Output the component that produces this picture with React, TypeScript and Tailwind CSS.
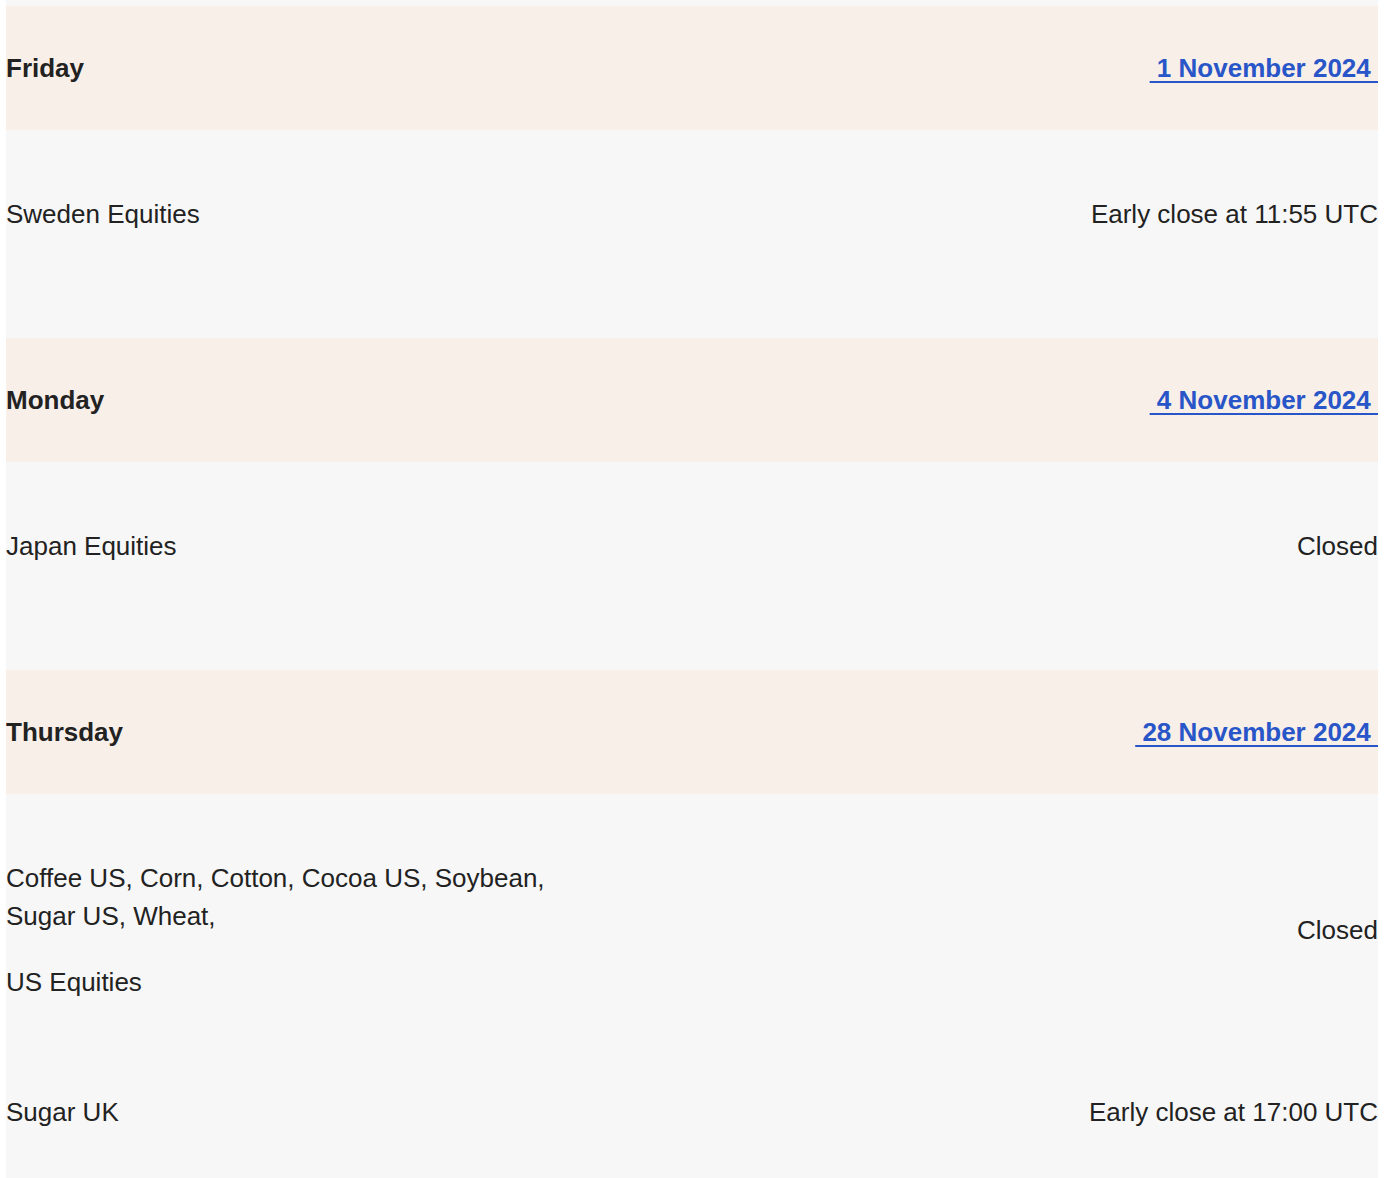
import React from "react";

type Item = { left: string[][]; right: string };
type Day = { day: string; date: string; items: Item[] };

const days: Day[] = [
  { day: "Friday", date: "1 November 2024", items: [{ left: [["Sweden Equities"]], right: "Early close at 11:55 UTC" }] },
  { day: "Monday", date: "4 November 2024", items: [{ left: [["Japan Equities"]], right: "Closed" }] },
  {
    day: "Thursday",
    date: "28 November 2024",
    items: [
      {
        left: [["Coffee US, Corn, Cotton, Cocoa US, Soybean,", "Sugar US, Wheat,"], ["US Equities"]],
        right: "Closed",
      },
      { left: [["Sugar UK"]], right: "Early close at 17:00 UTC" },
    ],
  },
];

export default function App() {
  return (
    <div
      className="min-h-[1178px] bg-white pl-[6px] pr-[10px] text-[#222222]"
      style={{ fontFamily: '"Liberation Sans", Arial, Helvetica, sans-serif' }}
    >
      <div className="bg-[#f7f7f7] pt-[6px]">
        {days.map((d) => (
          <section key={d.day}>
            <div className="flex h-[124px] items-center justify-between bg-[#f8efe9] text-[26px] font-bold leading-[38px]">
              <span>{d.day}</span>
              <a href="#" className="text-[#2855c7] underline decoration-[2px] underline-offset-[4px]">
                {"\u00a0" + d.date + "\u00a0"}
              </a>
            </div>
            <div className="flex flex-col gap-[92px] pt-[65px] pb-[105px] text-[26px] leading-[38px]">
              {d.items.map((it, i) => (
                <div key={i} className="flex items-center justify-between">
                  <div className="flex flex-col gap-[28px]">
                    {it.left.map((p, j) => (
                      <p key={j}>
                        {p.map((line, k) => (
                          <span key={k} className="block">
                            {line}
                          </span>
                        ))}
                      </p>
                    ))}
                  </div>
                  <span>{it.right}</span>
                </div>
              ))}
            </div>
          </section>
        ))}
      </div>
    </div>
  );
}
